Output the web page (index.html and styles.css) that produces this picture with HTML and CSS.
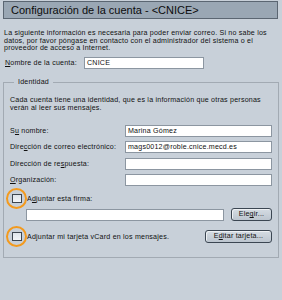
FILE: index.html
```html
<!DOCTYPE html>
<html lang="es">
<head>
<meta charset="utf-8">
<link rel="stylesheet" href="styles.css">
</head>
<body>
<div class="page">
  <div class="header">Configuración de la cuenta - &lt;CNICE&gt;</div>
  <p class="intro">La siguiente información es necesaria para poder enviar correo. Si no sabe los datos, por favor póngase en contacto con el administrador del sistema o el proveedor de acceso a Internet.</p>
  <div class="account">
    <label class="acc-label"><u>N</u>ombre de la cuenta:</label>
    <div class="field acc-field">CNICE</div>
  </div>
  <fieldset class="group">
    <legend>Identidad</legend>
    <p class="desc">Cada cuenta tiene una identidad, que es la información que otras personas verán al leer sus mensajes.</p>
    <div class="form">
      <label>S<u>u</u> nombre:</label><div class="field">Marina Gómez</div>
      <label>Dire<u>c</u>ción de correo electrónico:</label><div class="field">mags0012@roble.cnice.mecd.es</div>
      <label>Dirección de re<u>s</u>puesta:</label><div class="field"></div>
      <label><u>O</u>rganización:</label><div class="field"></div>
    </div>
    <div class="check-row">
      <span class="check"><span class="box"></span><span class="ring"></span></span>
      <span>A<u>d</u>juntar esta firma:</span>
    </div>
    <div class="file-row">
      <div class="field file-field"></div>
      <button class="btn btn-choose">Ele<u>g</u>ir...</button>
    </div>
    <div class="check-row vcard-row">
      <span class="check"><span class="box"></span><span class="ring"></span></span>
      <span class="vcard-label">Adjuntar mi tarjeta vCard en los mensajes.</span>
      <button class="btn btn-edit">E<u>d</u>itar tarjeta...</button>
    </div>
  </fieldset>
</div>
</body>
</html>
```
FILE: styles.css
```css
html, body {
  margin: 0;
  padding: 0;
  background: #c8d0d9;
}
body {
  width: 282px;
  height: 300px;
  overflow: hidden;
  font-family: "Liberation Sans", Arial, sans-serif;
  font-size: 7.1px;
  letter-spacing: 0.2px;
  color: #111;
}
u { text-decoration: underline; }
.page {
  display: flex;
  flex-direction: column;
  padding: 1px 4px 0 3px;
}
.header {
  height: 16px;
  border: 1px solid #5b6672;
  background: #9aa7b4;
  font-size: 11px;
  letter-spacing: 0;
  line-height: 17px;
  padding-left: 7px;
  color: #0c0c0c;
}
.intro {
  margin: 11px 0 0 1px;
  width: 270px;
  line-height: 7.6px;
}
.account {
  display: flex;
  align-items: center;
  margin-top: 4px;
  padding-left: 2px;
}
.acc-label { width: 79px; }
.field {
  height: 10px;
  background: #fff;
  border: 1px solid #8c96a1;
  line-height: 10px;
  padding-left: 2px;
  color: #111;
}
.acc-field { width: 116px; }
.group {
  margin: 9px 0 0 0;
  border: 1px solid #a2aab3;
  padding: 0 6px 14px 6px;
}
.group legend {
  padding: 0 4px;
  margin-left: 4px;
  line-height: 9px;
}
.desc {
  margin: 9px 0 0 0;
  width: 262px;
  line-height: 8.4px;
}
.form {
  display: grid;
  grid-template-columns: 115px 1fr;
  row-gap: 4.5px;
  align-items: center;
  margin-top: 12px;
}
.check-row {
  display: flex;
  align-items: center;
  margin-top: 8px;
  gap: 5px;
  padding-left: 2px;
}
.check {
  position: relative;
  width: 10px;
  height: 9px;
  flex: none;
}
.box {
  display: block;
  width: 8px;
  height: 7px;
  border: 1px solid #3d4650;
  background: linear-gradient(#dfe5eb, #f2f5f8);
}
.ring {
  position: absolute;
  left: -6px;
  top: -6px;
  width: 17px;
  height: 17px;
  border: 2px solid #f39a1e;
  border-radius: 50%;
}
.file-row {
  display: flex;
  align-items: center;
  margin-top: 5px;
  padding-left: 16px;
}
.file-field { width: 194px; }
.btn {
  font-family: inherit;
  font-size: 7.1px;
  letter-spacing: 0.2px;
  color: #111;
  height: 13px;
  border: 1px solid #3b4652;
  border-radius: 3px;
  background: linear-gradient(#d5dce3, #bcc5cf);
  padding: 0;
  line-height: 11px;
  box-shadow: inset 1px 1px 0 #eef1f4;
}
.btn-choose { width: 41px; margin-left: auto; }
.btn-edit { width: 67px; margin-left: auto; }
.vcard-row { margin-top: 9px; }
```
